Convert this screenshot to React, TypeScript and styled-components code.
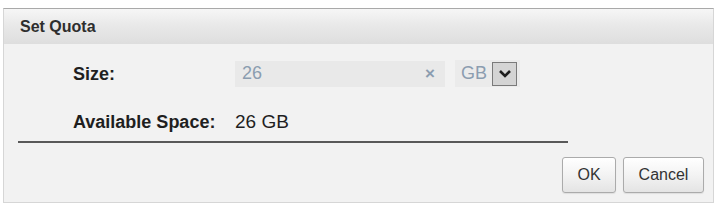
import styled, { createGlobalStyle } from 'styled-components';

const GlobalStyle = createGlobalStyle`
  html, body {
    margin: 0;
    padding: 0;
    background: #ffffff;
  }
  body {
    font-family: 'Liberation Sans', Arial, sans-serif;
  }
`;

export default function App() {
  return (
    <>
      <GlobalStyle />
      <Dialog>
        <Header>
          <Title>Set Quota</Title>
        </Header>

        <Body>
          <Form>
            <Label>Size:</Label>
            <Field>
              <TextBox>
                <Value>26</Value>
                <Clear>×</Clear>
              </TextBox>
              <UnitSelect>
                <UnitText>GB</UnitText>
                <ArrowBox>
                  <svg width="14" height="10" viewBox="0 0 14 10">
                    <path
                      d="M2 2 L7 7 L12 2"
                      fill="none"
                      stroke="#1e1e1e"
                      strokeWidth="2.6"
                    />
                  </svg>
                </ArrowBox>
              </UnitSelect>
            </Field>

            <Label $second>Available Space:</Label>
            <Plain $second>26 GB</Plain>
          </Form>

          <Separator />

          <Footer>
            <Button $width={54}>OK</Button>
            <Button $width={81}>Cancel</Button>
          </Footer>
        </Body>
      </Dialog>
    </>
  );
}

/* STYLES */
const Dialog = styled.div`
  margin: 8px 0 0 3px;
  width: 711px;
  box-sizing: border-box;
  border: 1px solid #d6d6d6;
  border-top: 1px solid #a9a9a9;
  background: #f2f2f2;
`;

const Header = styled.div`
  display: flex;
  align-items: center;
  height: 35px;
  padding-left: 16px;
  background: linear-gradient(#f6f6f6 0%, #e9e9e9 45%, #dedede 100%);
`;

const Title = styled.span`
  color: #2e2e2e;
  font-size: 16px;
  font-weight: 700;
`;

const Body = styled.div`
  padding-top: 16px;
`;

const Form = styled.div`
  display: grid;
  grid-template-columns: 162px auto;
  align-items: center;
  margin-left: 69px;
`;

const Label = styled.span<{ $second?: boolean }>`
  color: #1f1f1f;
  font-size: 18px;
  font-weight: 700;
  line-height: 22px;
  margin-top: ${(p) => (p.$second ? '24px' : '0')};
`;

const Plain = styled.span<{ $second?: boolean }>`
  color: #1f1f1f;
  font-size: 19px;
  line-height: 22px;
  margin-top: ${(p) => (p.$second ? '24px' : '0')};
`;

const Field = styled.div`
  display: flex;
  align-items: center;
  gap: 10px;
`;

const TextBox = styled.div`
  display: flex;
  align-items: center;
  justify-content: space-between;
  width: 210px;
  height: 26px;
  box-sizing: border-box;
  padding: 0 10px 0 7px;
  background: #e9e9e9;
`;

const Value = styled.span`
  color: #8b9db0;
  font-size: 18px;
`;

const Clear = styled.span`
  color: #8b9db0;
  font-size: 17px;
  font-weight: 700;
`;

const UnitSelect = styled.div`
  display: flex;
  align-items: center;
  gap: 5px;
  height: 27px;
  padding: 0 3px 0 6px;
  background: #ebebeb;
`;

const UnitText = styled.span`
  color: #8b9db0;
  font-size: 18px;
`;

const ArrowBox = styled.div`
  display: flex;
  align-items: center;
  justify-content: center;
  width: 23px;
  height: 22px;
  border: 1px solid #7a7a7a;
  background: #d4d4d4;
`;

const Separator = styled.div`
  margin: 8px 0 0 14px;
  width: 550px;
  height: 2px;
  background: #595959;
`;

const Footer = styled.div`
  display: flex;
  justify-content: flex-end;
  gap: 7px;
  padding: 14px 9px 9px 0;
`;

const Button = styled.button<{ $width: number }>`
  width: ${(p) => p.$width}px;
  height: 36px;
  padding: 0;
  border: 1px solid #ababab;
  border-radius: 3px;
  background: linear-gradient(#ffffff 0%, #f3f3f3 50%, #e4e4e4 100%);
  color: #333333;
  font-family: 'Liberation Sans', Arial, sans-serif;
  font-size: 16px;
  box-shadow: 0 1px 1px rgba(0, 0, 0, 0.08);
`;
